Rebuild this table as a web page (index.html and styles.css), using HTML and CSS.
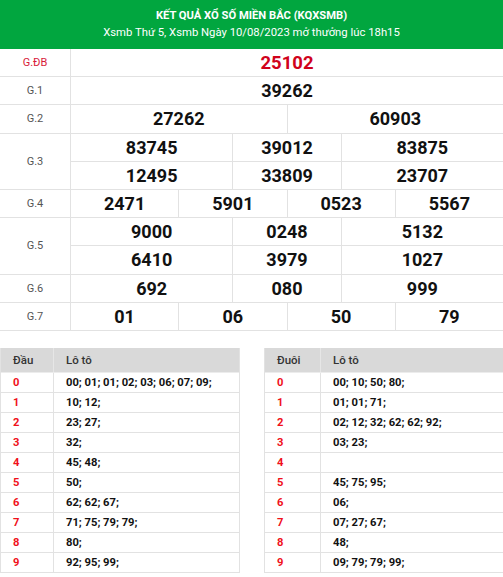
FILE: index.html
```html
<!DOCTYPE html>
<html lang="vi">
<head>
<meta charset="utf-8">
<link rel="stylesheet" href="styles.css">
</head>
<body>
<div class="page">
  <div class="head">
    <div class="title">KẾT QUẢ XỔ SỐ MIỀN BẮC (KQXSMB)</div>
    <div class="sub">Xsmb Thứ 5, Xsmb Ngày 10/08/2023 mở thưởng lúc 18h15</div>
  </div>

  <div class="results">
    <div class="prize">
      <div class="label db">G.ĐB</div>
      <div class="vals c1"><div class="v red">25102</div></div>
    </div>
    <div class="prize">
      <div class="label">G.1</div>
      <div class="vals c1"><div class="v">39262</div></div>
    </div>
    <div class="prize">
      <div class="label">G.2</div>
      <div class="vals c2"><div class="v">27262</div><div class="v">60903</div></div>
    </div>
    <div class="prize">
      <div class="label">G.3</div>
      <div class="vals c3">
        <div class="v">83745</div><div class="v">39012</div><div class="v">83875</div>
        <div class="v">12495</div><div class="v">33809</div><div class="v">23707</div>
      </div>
    </div>
    <div class="prize">
      <div class="label">G.4</div>
      <div class="vals c4"><div class="v">2471</div><div class="v">5901</div><div class="v">0523</div><div class="v">5567</div></div>
    </div>
    <div class="prize">
      <div class="label">G.5</div>
      <div class="vals c3">
        <div class="v">9000</div><div class="v">0248</div><div class="v">5132</div>
        <div class="v">6410</div><div class="v">3979</div><div class="v">1027</div>
      </div>
    </div>
    <div class="prize">
      <div class="label">G.6</div>
      <div class="vals c3"><div class="v">692</div><div class="v">080</div><div class="v">999</div></div>
    </div>
    <div class="prize">
      <div class="label">G.7</div>
      <div class="vals c4"><div class="v">01</div><div class="v">06</div><div class="v">50</div><div class="v">79</div></div>
    </div>
  </div>

  <div class="loto">
    <div class="lt left">
      <div class="lr lh"><div class="k">Đầu</div><div class="n">Lô tô</div></div>
      <div class="lr"><div class="k">0</div><div class="n">00; 01; 01; 02; 03; 06; 07; 09;</div></div>
      <div class="lr"><div class="k">1</div><div class="n">10; 12;</div></div>
      <div class="lr"><div class="k">2</div><div class="n">23; 27;</div></div>
      <div class="lr"><div class="k">3</div><div class="n">32;</div></div>
      <div class="lr"><div class="k">4</div><div class="n">45; 48;</div></div>
      <div class="lr"><div class="k">5</div><div class="n">50;</div></div>
      <div class="lr"><div class="k">6</div><div class="n">62; 62; 67;</div></div>
      <div class="lr"><div class="k">7</div><div class="n">71; 75; 79; 79;</div></div>
      <div class="lr"><div class="k">8</div><div class="n">80;</div></div>
      <div class="lr"><div class="k">9</div><div class="n">92; 95; 99;</div></div>
    </div>
    <div class="lt right">
      <div class="lr lh"><div class="k">Đuôi</div><div class="n">Lô tô</div></div>
      <div class="lr"><div class="k">0</div><div class="n">00; 10; 50; 80;</div></div>
      <div class="lr"><div class="k">1</div><div class="n">01; 01; 71;</div></div>
      <div class="lr"><div class="k">2</div><div class="n">02; 12; 32; 62; 62; 92;</div></div>
      <div class="lr"><div class="k">3</div><div class="n">03; 23;</div></div>
      <div class="lr"><div class="k">4</div><div class="n"></div></div>
      <div class="lr"><div class="k">5</div><div class="n">45; 75; 95;</div></div>
      <div class="lr"><div class="k">6</div><div class="n">06;</div></div>
      <div class="lr"><div class="k">7</div><div class="n">07; 27; 67;</div></div>
      <div class="lr"><div class="k">8</div><div class="n">48;</div></div>
      <div class="lr"><div class="k">9</div><div class="n">09; 79; 79; 99;</div></div>
    </div>
  </div>
</div>
</body>
</html>
```

FILE: styles.css
```css
* { box-sizing: border-box; }
html, body { margin: 0; padding: 0; background: #fff; }
body { font-family: Roboto, "Noto Sans", "Liberation Sans", sans-serif; color: #111; overflow: hidden; }
.page { width: 503px; }

.head {
  background: #01a63f;
  color: #fff;
  height: 49px;
  display: flex;
  flex-direction: column;
  align-items: center;
  padding-top: 8px;
}
.title { font-size: 11.2px; font-weight: 700; line-height: 15px; }
.sub { font-size: 11.3px; line-height: 16px; margin-top: 2px; }

.prize {
  display: grid;
  grid-template-columns: 70px 1fr;
  border-bottom: 1px solid #e2e2e2;
}
.label {
  display: flex;
  align-items: center;
  justify-content: center;
  font-size: 11px;
  color: #555;
}
.label.db { color: #d81b3a; }
.vals { display: grid; }
.c1 { grid-template-columns: 1fr; }
.c2 { grid-template-columns: 1fr 1fr; }
.c3 { grid-template-columns: 1.5fr 1fr 1.5fr; }
.c4 { grid-template-columns: 1fr 1fr 1fr 1fr; }
.v {
  height: 27.2px;
  display: flex;
  align-items: center;
  justify-content: center;
  border-left: 1px solid #e2e2e2;
  font-size: 18px;
  font-weight: 700;
  color: #111;
}
.c3 .v:nth-child(n+4) { border-top: 1px solid #e2e2e2; height: 28.2px; }
.v.red { color: #d0021b; font-size: 18.5px; }

.loto {
  display: flex;
  gap: 24px;
  margin-top: 17px;
}
.lt { width: 240px; flex: none; border-left: 1px solid #e2e2e2; border-right: 1px solid #e2e2e2; }
.left .k { width: 53px; }
.right .k { width: 56px; }
.lr {
  display: flex;
  height: 20px;
  border-bottom: 1px solid #e2e2e2;
  font-size: 11.2px;
}
.lr .k {
  flex: none;
  padding-left: 12px;
  display: flex;
  align-items: center;
  border-right: 1px solid #e2e2e2;
  color: #f0101a;
  font-weight: 700;
}
.lr .n {
  flex: 1;
  padding-left: 12px;
  display: flex;
  align-items: center;
  font-weight: 700;
  color: #111;
}
.lr.lh {
  height: 25px;
  background: #d9d9d9;
  border-bottom: 1px solid #ececec;
  font-size: 11.5px;
}
.lr.lh .k, .lr.lh .n { color: #333; font-weight: 500; border-right-color: #e6e6e6; }
```
